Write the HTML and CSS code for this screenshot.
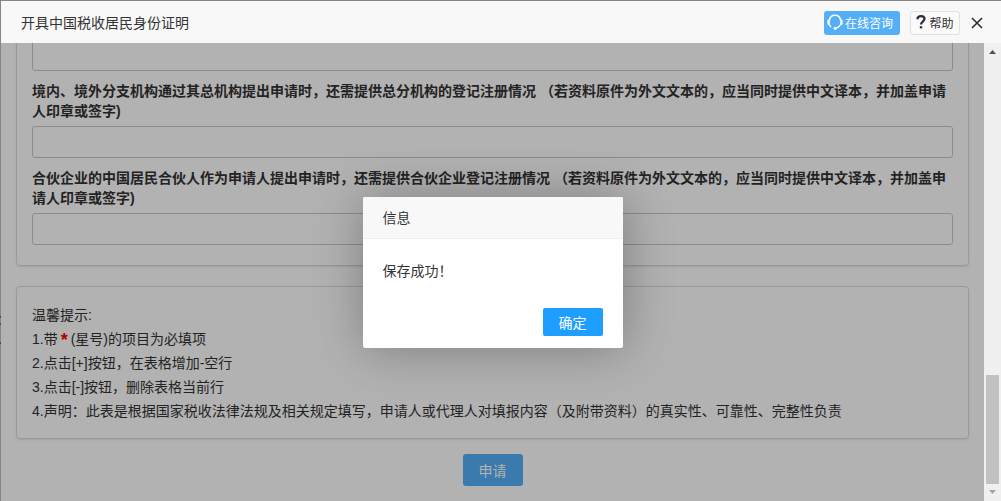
FILE: index.html
```html
<!DOCTYPE html>
<html lang="zh-CN">
<head>
    <meta charset="UTF-8">
    <meta name="viewport" content="width=device-width, initial-scale=1.0">
    <title>开具中国税收居民身份证明</title>
    <link rel="stylesheet" href="styles.css">
</head>
<body>

<div class="window">
    <!-- Title bar -->
    <header class="header">
        <h1>开具中国税收居民身份证明</h1>
        <div class="header-tools">
            <button type="button" class="btn-consult">
                <svg width="16" height="16" viewBox="0 0 16 16" fill="none" stroke="#fff">
                    <path d="M2.400 6.500C2.800 3 5 1.200 8 1.200s5.200 1.800 5.600 5.300" stroke-width="1.500"/>
                    <path d="M1.600 6.800v3M14.400 6.800v3" stroke-width="2.400" stroke-linecap="round"/>
                    <path d="M2.400 10.500c.4 1.200 1 2 1.800 2.600M13.600 10.500c-.7 1.900-2 3.100-4.600 3.900" stroke-width="1.300"/>
                    <circle cx="8.200" cy="14.300" r="1.600" fill="#fff" stroke="none"/>
                </svg>
                <span>在线咨询</span>
            </button>
            <button type="button" class="btn-help">
                <svg width="10" height="14" viewBox="0 0 10 14" fill="none" stroke="#2b2b3d">
                    <path d="M1.400 4.200C1.400 2.200 3 1.200 5 1.200s3.500 1 3.500 2.900C8.500 6.300 5 6.400 5 9.400" stroke-width="2.200"/>
                    <path d="M5 11.200v2.200" stroke-width="2.400"/>
                </svg>
                <span>帮助</span>
            </button>
            <button type="button" class="btn-close" aria-label="关闭">
                <svg width="12" height="12" viewBox="0 0 12 12" stroke="#2e2d3c" stroke-width="1.600">
                    <path d="M1 1l10 10M11 1L1 11"/>
                </svg>
            </button>
        </div>
    </header>

    <div class="body">
        <main class="content">
            <form class="card form-card">
                <input type="text" aria-label="登记注册情况">
                <label for="branch">境内、境外分支机构通过其总机构提出申请时，还需提供总分机构的登记注册情况 （若资料原件为外文文本的，应当同时提供中文译本，并加盖申请人印章或签字)</label>
                <input type="text" id="branch">
                <label for="partner">合伙企业的中国居民合伙人作为申请人提出申请时，还需提供合伙企业登记注册情况 （若资料原件为外文文本的，应当同时提供中文译本，并加盖申请人印章或签字)</label>
                <input type="text" id="partner">
            </form>

            <section class="card tips">
                <p>温馨提示:</p>
                <p>1.带<span class="star">*</span>(星号)的项目为必填项</p>
                <p>2.点击[+]按钮，在表格增加-空行</p>
                <p>3.点击[-]按钮，删除表格当前行</p>
                <p>4.声明：此表是根据国家税收法律法规及相关规定填写，申请人或代理人对填报内容（及附带资料）的真实性、可靠性、完整性负责</p>
            </section>

            <button type="button" class="btn-apply">申请</button>

            <!-- Message dialog -->
            <div class="shade">
                <div class="dialog" role="dialog" aria-labelledby="dialogTitle">
                    <h2 id="dialogTitle">信息</h2>
                    <p>保存成功！</p>
                    <div class="dialog-buttons">
                        <button type="button">确定</button>
                    </div>
                </div>
            </div>
        </main>

        <div class="scrollbar">
            <svg width="7" height="4" viewBox="0 0 7 4"><path d="M0 4L3.500 0 7 4z" fill="#505050"/></svg>
            <div class="thumb"></div>
            <svg width="7" height="4" viewBox="0 0 7 4"><path d="M0 0h7L3.500 4z" fill="#a3a3a3"/></svg>
        </div>
    </div>
</div>

</body>
</html>
```
FILE: styles.css
```css
* {
    box-sizing: border-box;
}

body {
    margin: 0;
    /* sliver of the page behind the window */
    background: linear-gradient(#858585 316px, #0d559a 316px, #0d559a 318px, #858585 318px, #858585 323px, #0d559a 323px, #0d559a 325px, #858585 325px, #858585 342px, #0d559a 342px, #0d559a 344px, #858585 344px);
    color: #333;
    font-family: "Liberation Sans", "Noto Sans CJK SC", sans-serif;
    font-size: 14px;
}

h1, h2, p {
    margin: 0;
    font-size: 14px;
    font-weight: normal;
}

button {
    font-family: inherit;
    cursor: pointer;
}

.window {
    display: flex;
    flex-direction: column;
    height: 100vh;
    padding: 1px 0 0 1px;
}

/* Title bar */
.header {
    display: flex;
    flex: none;
    justify-content: space-between;
    align-items: center;
    height: 42px;
    padding: 0 17px 0 20px;
    background-color: #f8f8f8;
}

.header-tools {
    display: flex;
    align-items: center;
    gap: 10px;
    padding-top: 2px;
}

.header-tools button {
    display: flex;
    align-items: center;
    justify-content: center;
    height: 24px;
    padding: 0 0 2px;
    border-radius: 3px;
    font-size: 12px;
}

.header-tools .btn-consult {
    width: 76px;
    gap: 2px;
    padding-right: 4px;
    border: none;
    background-color: #54aff6;
    color: #fff;
}

.header-tools .btn-help {
    width: 50px;
    gap: 3px;
    border: 1px solid #e0e0e0;
    background-color: #fafafa;
    color: #333;
}

.header-tools .btn-close {
    width: 14px;
    padding: 0;
    border: none;
    background: none;
}

/* Page body, scrolled to its end */
.body {
    display: flex;
    flex: 1;
    min-height: 0;
}

.content {
    position: relative;
    display: flex;
    flex: 1;
    flex-direction: column;
    justify-content: flex-end;
    align-items: center;
    padding: 0 15px 15px;
    background-color: #fff;
    overflow: hidden;
}

.card {
    flex: none;
    width: 100%;
    border: 1px solid #dcdcdc;
    border-radius: 4px;
    box-shadow: 0 1px 2px rgba(0, 0, 0, 0.1);
}

.form-card {
    padding: 20px 15px;
}

.form-card label {
    display: block;
    margin: 10px 0 5px;
    font-weight: bold;
    line-height: 20px;
}

.form-card input {
    display: block;
    width: 100%;
    height: 32px;
    padding: 0 10px;
    border: 1px solid #c8c8c8;
    border-radius: 3px;
    background-color: #fff;
}

.tips {
    margin-top: 20px;
    padding: 16px 15px 15px;
    line-height: 24px;
}

.star {
    margin: 0 3px;
    color: #f00;
    font-size: 18px;
    font-weight: bold;
    line-height: 20px;
    vertical-align: middle;
}

.btn-apply {
    flex: none;
    width: 60px;
    height: 32px;
    margin-top: 15px;
    padding: 0;
    border: none;
    border-radius: 3px;
    background-color: #54aff6;
    color: #fff;
    font-size: 14px;
}

/* Dialog */
.shade {
    position: absolute;
    inset: 0;
    display: flex;
    justify-content: center;
    align-items: center;
    background-color: rgba(0, 0, 0, 0.3);
}

.dialog {
    width: 260px;
    border-radius: 2px;
    background-color: #fff;
    box-shadow: 1px 1px 50px rgba(0, 0, 0, 0.3);
}

.dialog h2 {
    height: 42px;
    padding: 0 20px;
    border-bottom: 1px solid #eee;
    border-radius: 2px 2px 0 0;
    background-color: #f8f8f8;
    line-height: 42px;
}

.dialog p {
    padding: 20px;
    line-height: 24px;
}

.dialog-buttons {
    display: flex;
    justify-content: flex-end;
    padding: 5px 20px 12px;
}

.dialog-buttons button {
    width: 60px;
    height: 28px;
    padding: 0;
    border: none;
    border-radius: 2px;
    background-color: #1e9fff;
    color: #fff;
    font-size: 14px;
}

.scrollbar {
    display: flex;
    flex: none;
    flex-direction: column;
    align-items: center;
    width: 17px;
    padding: 7px 0;
    background-color: #f0f0f0;
}

.thumb {
    width: 13px;
    height: 109px;
    margin: auto 0 6px;
    background-color: #c1c1c1;
}
```
